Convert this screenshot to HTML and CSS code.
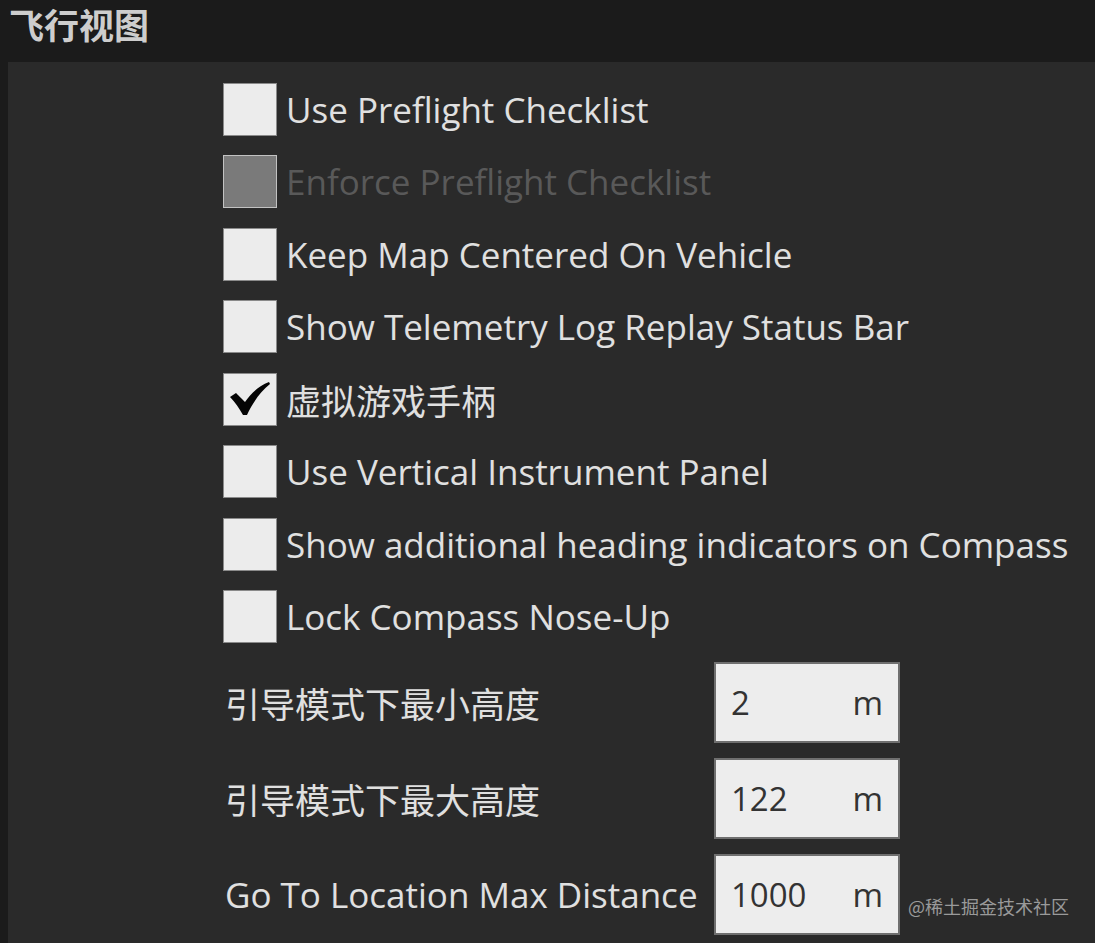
FILE: index.html
```html
<!DOCTYPE html>
<html lang="zh-CN">
<head>
    <meta charset="UTF-8">
    <meta name="viewport" content="width=device-width, initial-scale=1.0">
    <title>飞行视图</title>
    <link rel="stylesheet" href="styles.css">
</head>
<body>
    <h1 class="title">飞行视图</h1>
    <section class="panel">
        <div class="check-row">
            <span class="box"></span>
            <span class="label">Use Preflight Checklist</span>
        </div>
        <div class="check-row disabled">
            <span class="box"></span>
            <span class="label">Enforce Preflight Checklist</span>
        </div>
        <div class="check-row">
            <span class="box"></span>
            <span class="label">Keep Map Centered On Vehicle</span>
        </div>
        <div class="check-row">
            <span class="box"></span>
            <span class="label">Show Telemetry Log Replay Status Bar</span>
        </div>
        <div class="check-row">
            <span class="box">
                <svg class="tick" viewBox="0 0 54 53" width="54" height="53">
                    <path d="M7 24 L13 20 L22 29 C28 20 36 13 46 9 L47 11 C38 18 30 29 24 42 L20 42 C16 35 12 29 7 24 Z" fill="#050505"/>
                </svg>
            </span>
            <span class="label cjk">虚拟游戏手柄</span>
        </div>
        <div class="check-row">
            <span class="box"></span>
            <span class="label">Use Vertical Instrument Panel</span>
        </div>
        <div class="check-row">
            <span class="box"></span>
            <span class="label">Show additional heading indicators on Compass</span>
        </div>
        <div class="check-row">
            <span class="box"></span>
            <span class="label">Lock Compass Nose-Up</span>
        </div>

        <div class="field-row">
            <span class="field-label cjk">引导模式下最小高度</span>
            <div class="field">
                <span class="value">2</span>
                <span class="unit">m</span>
            </div>
        </div>
        <div class="field-row">
            <span class="field-label cjk">引导模式下最大高度</span>
            <div class="field">
                <span class="value">122</span>
                <span class="unit">m</span>
            </div>
        </div>
        <div class="field-row">
            <span class="field-label">Go To Location Max Distance</span>
            <div class="field">
                <span class="value">1000</span>
                <span class="unit">m</span>
            </div>
        </div>
    </section>
    <div class="watermark">@稀土掘金技术社区</div>
</body>
</html>
```

FILE: styles.css
```css
body {
    margin: 0;
    background-color: #1b1b1b;
    font-family: "Open Sans", "Noto Sans CJK SC", sans-serif;
    color: #e0e0e0;
    height: 943px;
    overflow: hidden;
    position: relative;
}

.title {
    margin: 0;
    height: 62px;
    padding-left: 9px;
    font-family: "Noto Sans CJK SC", sans-serif;
    font-size: 35px;
    font-weight: 700;
    line-height: 48px;
    color: #cdcdcd;
}

.panel {
    margin-left: 8px;
    background-color: #2a2a2a;
    padding: 20px 0 0 215px;
    min-height: 881px;
    box-sizing: border-box;
}

.check-row {
    display: flex;
    align-items: center;
    gap: 9px;
    height: 54px;
    margin-bottom: 18.5px;
}

.box {
    width: 52px;
    height: 51px;
    flex: none;
    background-color: #ececec;
    border: 1px solid #8a8a8a;
    position: relative;
}

.tick {
    position: absolute;
    left: -1px;
    top: -1px;
}

.label {
    font-size: 35px;
    white-space: nowrap;
}

.cjk {
    font-family: "Noto Sans CJK SC", sans-serif;
    font-size: 35px;
}

.disabled .box {
    background-color: #7a7a7a;
    border-color: #c2c2c2;
}

.disabled .label {
    color: #595959;
}

.field-row {
    display: flex;
    align-items: center;
    height: 81px;
    margin-bottom: 15px;
    padding-left: 2px;
}

.check-row + .field-row {
    margin-top: 2px;
}

.field-label {
    width: 489px;
    font-size: 35px;
    white-space: nowrap;
}

.field {
    width: 152px;
    height: 77px;
    background-color: #ededed;
    border: 2px solid #6f6f6f;
    display: flex;
    align-items: center;
    justify-content: space-between;
    padding: 0 15px;
    color: #333;
    font-size: 33px;
}

.watermark {
    position: absolute;
    right: 26px;
    bottom: 24px;
    font-family: "Noto Sans CJK SC", sans-serif;
    font-size: 18px;
    color: #9a9a9a;
}
```
